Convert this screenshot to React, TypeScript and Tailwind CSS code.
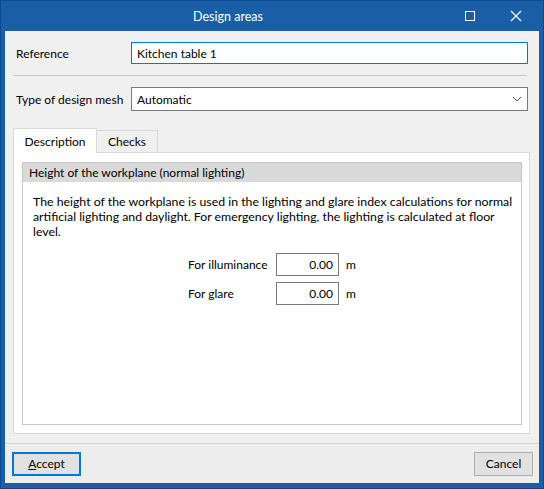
export default function App() {
  return (
    <div className="w-[544px] h-[489px] bg-[#1a5ea8] border border-[#0d4a93] flex flex-col px-[4px] pb-[5px] font-['Lato',sans-serif] text-[12px] leading-[15px] text-black">
      <div className="h-[30px] flex items-center shrink-0 text-white">
        <div className="flex-1 text-center pl-[4px] text-[12.5px]">Design areas</div>
        <div className="w-[46px] h-full flex items-center justify-center">
          <div className="w-[10px] h-[10px] border border-white" />
        </div>
        <div className="w-[46px] h-full flex items-center justify-center">
          <svg width="12" height="12" viewBox="0 0 12 12">
            <path d="M1 1 L11 11 M11 1 L1 11" stroke="white" strokeWidth="1.2" />
          </svg>
        </div>
      </div>

      <div className="flex-1 bg-[#f0f0f0] flex flex-col">
        <div className="flex items-center mt-[11px] pl-[11px] pr-[11px]">
          <span className="w-[115px] whitespace-nowrap">Reference</span>
          <input
            className="flex-1 h-[22px] border border-[#0078d7] bg-white px-[5px] outline-none"
            defaultValue="Kitchen table 1"
          />
        </div>

        <div className="h-px bg-[#c8c8c8] ml-[8px] mr-[12px] mt-[11px]" />

        <div className="flex items-center mt-[11px] pl-[11px] pr-[11px]">
          <span className="w-[115px] whitespace-nowrap">Type of design mesh</span>
          <div className="flex-1 h-[24px] border border-[#7a7a7a] bg-white flex items-center pl-[5px] pr-[5px]">
            <span className="flex-1">Automatic</span>
            <svg width="10" height="6" viewBox="0 0 10 6">
              <path d="M1 1 L5 5 L9 1" stroke="#555" strokeWidth="1" fill="none" />
            </svg>
          </div>
        </div>

        <div className="ml-[8px] mr-[9px] mt-[17px] flex flex-col">
          <div className="flex items-end h-[24px]">
            <div className="h-[25px] w-[84px] bg-white border border-b-0 border-[#d9d9d9] flex items-center justify-center relative top-px z-10">
              Description
            </div>
            <div className="h-[22px] w-[61px] bg-[#f0f0f0] border border-l-0 border-b-0 border-[#d9d9d9] flex items-center justify-center">
              Checks
            </div>
          </div>
          <div className="h-[282px] bg-white border border-[#d9d9d9] pt-[9px] pl-[8px] pr-[7px] pb-[8px] flex">
            <div className="flex-1 border border-[#c8c8c8] flex flex-col">
              <div className="h-[19px] bg-[#d9d9d9] flex items-center pl-[6px]">
                Height of the workplane (normal lighting)
              </div>
              <p className="mt-[12px] pl-[10px] pr-[2px] text-[12.3px] leading-[15px]">
                The height of the workplane is used in the lighting and glare index calculations for normal artificial lighting and daylight. For emergency lighting, the lighting is calculated at floor level.
              </p>
              <div className="mt-[14px] flex flex-col gap-[6px] pl-[165px]">
                <div className="flex items-center">
                  <span className="w-[88px]">For illuminance</span>
                  <div className="w-[63px] h-[23px] border border-[#7a7a7a] bg-white flex items-center justify-end pr-[5px]">0.00</div>
                  <span className="ml-[7px]">m</span>
                </div>
                <div className="flex items-center">
                  <span className="w-[88px]">For glare</span>
                  <div className="w-[63px] h-[23px] border border-[#7a7a7a] bg-white flex items-center justify-end pr-[5px]">0.00</div>
                  <span className="ml-[7px]">m</span>
                </div>
              </div>
            </div>
          </div>
        </div>

        <div className="mt-auto border-t border-[#d4d4d4] h-[40px] flex items-center justify-between pl-[7px] pr-[6px] bg-[#ededed]">
          <button className="w-[69px] h-[24px] border-2 border-[#0078d7] bg-[#e1e1e1] flex items-center justify-center">
            <span><span className="underline">A</span>ccept</span>
          </button>
          <button className="w-[59px] h-[24px] border border-[#adadad] bg-[#e1e1e1] flex items-center justify-center">
            Cancel
          </button>
        </div>
      </div>
    </div>
  );
}
